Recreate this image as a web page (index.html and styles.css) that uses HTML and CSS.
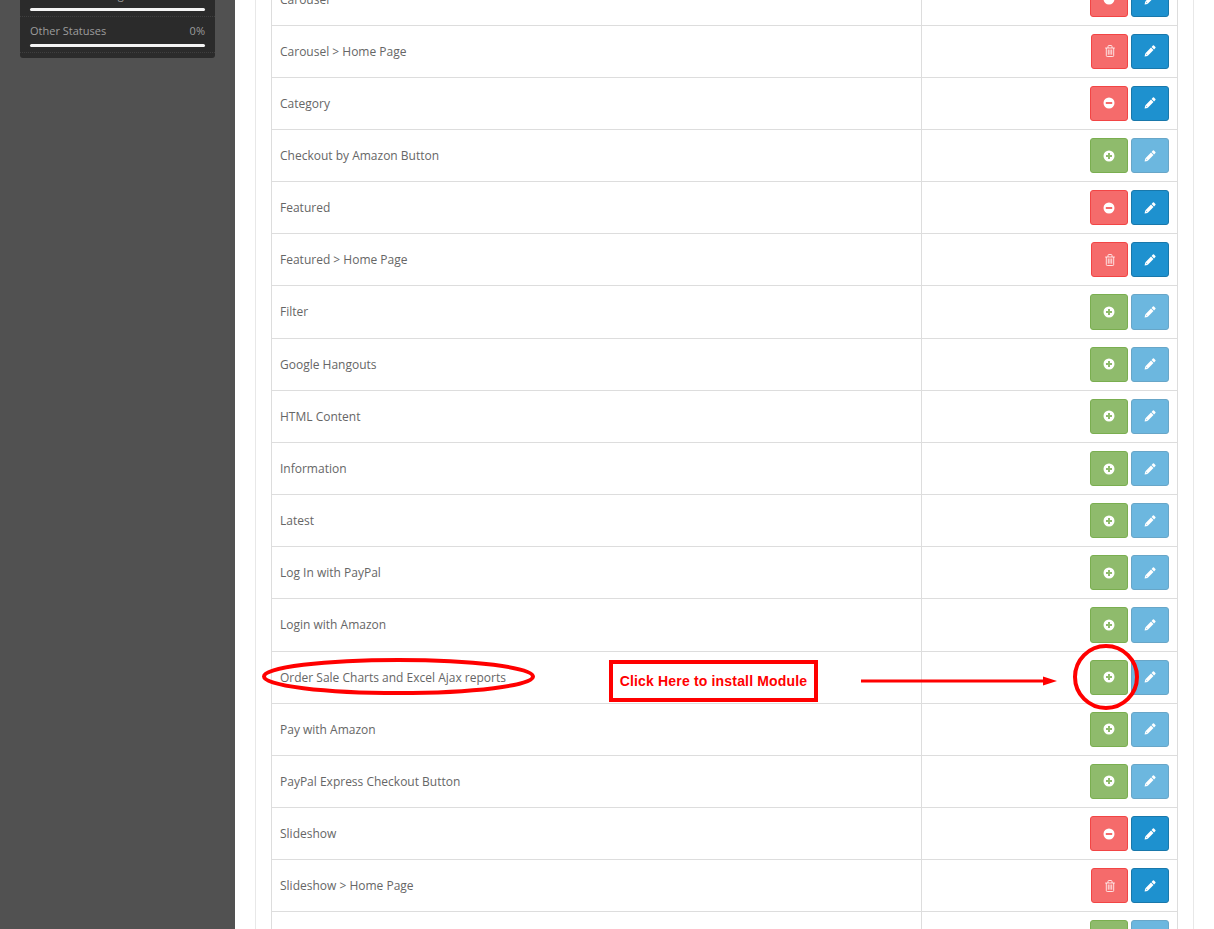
FILE: index.html
```html
<!DOCTYPE html>
<html lang="en">
<head>
  <meta charset="UTF-8">
  <title>Modules</title>
  <link rel="stylesheet" href="styles.css">
</head>
<body>
  <svg class="icon-defs" width="0" height="0">
    <defs>
      <symbol id="i-plus" viewBox="0 0 12 12"><path fill-rule="evenodd" d="M6 .5a5.500 5.500 0 1 0 0 11 5.500 5.500 0 0 0 0-11zM5 3h2v2h2v2H7v2H5V7H3V5h2z"/></symbol>
      <symbol id="i-minus" viewBox="0 0 12 12"><path fill-rule="evenodd" d="M6 .5a5.500 5.500 0 1 0 0 11 5.500 5.500 0 0 0 0-11zM2.800 5h6.400v2H2.800z"/></symbol>
      <symbol id="i-pencil" viewBox="0 0 12 12"><path d="M8.900.6a.8.8 0 0 1 1.100 0l1.400 1.400a.8.8 0 0 1 0 1.100L10.100 4.400 7.600 1.900zM7 2.500 9.500 5l-5.900 5.900-3 .6.600-3zM1.700 8.900l1.400 1.400.5-.1-1.800-1.800z" fill-rule="evenodd"/></symbol>
      <symbol id="i-trash" viewBox="0 0 12 12"><path fill="none" stroke="currentColor" stroke-width=".8" d="M1.200 3h9.600M2.300 3v7.600a.9.900 0 0 0 .9.900h5.600a.9.900 0 0 0 .9-.9V3M4 3V1.400a.9.900 0 0 1 .9-.9h2.200a.9.900 0 0 1 .9.900V3M4.300 4.500v5.200M6 4.500v5.200M7.700 4.500v5.200"/></symbol>
    </defs>
  </svg>

  <div class="layout">
    <aside class="sidebar">
      <div class="stats">
        <div class="stat">
          <div class="stat-label"><span>Orders Processing</span><span>0%</span></div>
          <div class="stat-bar"></div>
        </div>
        <div class="stat">
          <div class="stat-label"><span>Other Statuses</span><span>0%</span></div>
          <div class="stat-bar"></div>
        </div>
      </div>
    </aside>

    <main class="content">
      <div class="panel">
        <table class="module-table">
          <tbody>
            <tr><td>Carousel</td><td><div class="actions"><a class="btn btn-danger"><svg class="ico"><use href="#i-minus"/></svg></a><a class="btn btn-primary"><svg class="ico"><use href="#i-pencil"/></svg></a></div></td></tr>
            <tr><td>Carousel &gt; Home Page</td><td><div class="actions"><a class="btn btn-danger btn-narrow"><svg class="ico"><use href="#i-trash"/></svg></a><a class="btn btn-primary"><svg class="ico"><use href="#i-pencil"/></svg></a></div></td></tr>
            <tr><td>Category</td><td><div class="actions"><a class="btn btn-danger"><svg class="ico"><use href="#i-minus"/></svg></a><a class="btn btn-primary"><svg class="ico"><use href="#i-pencil"/></svg></a></div></td></tr>
            <tr><td>Checkout by Amazon Button</td><td><div class="actions"><a class="btn btn-success"><svg class="ico"><use href="#i-plus"/></svg></a><a class="btn btn-primary disabled"><svg class="ico"><use href="#i-pencil"/></svg></a></div></td></tr>
            <tr><td>Featured</td><td><div class="actions"><a class="btn btn-danger"><svg class="ico"><use href="#i-minus"/></svg></a><a class="btn btn-primary"><svg class="ico"><use href="#i-pencil"/></svg></a></div></td></tr>
            <tr><td>Featured &gt; Home Page</td><td><div class="actions"><a class="btn btn-danger btn-narrow"><svg class="ico"><use href="#i-trash"/></svg></a><a class="btn btn-primary"><svg class="ico"><use href="#i-pencil"/></svg></a></div></td></tr>
            <tr><td>Filter</td><td><div class="actions"><a class="btn btn-success"><svg class="ico"><use href="#i-plus"/></svg></a><a class="btn btn-primary disabled"><svg class="ico"><use href="#i-pencil"/></svg></a></div></td></tr>
            <tr><td>Google Hangouts</td><td><div class="actions"><a class="btn btn-success"><svg class="ico"><use href="#i-plus"/></svg></a><a class="btn btn-primary disabled"><svg class="ico"><use href="#i-pencil"/></svg></a></div></td></tr>
            <tr><td>HTML Content</td><td><div class="actions"><a class="btn btn-success"><svg class="ico"><use href="#i-plus"/></svg></a><a class="btn btn-primary disabled"><svg class="ico"><use href="#i-pencil"/></svg></a></div></td></tr>
            <tr><td>Information</td><td><div class="actions"><a class="btn btn-success"><svg class="ico"><use href="#i-plus"/></svg></a><a class="btn btn-primary disabled"><svg class="ico"><use href="#i-pencil"/></svg></a></div></td></tr>
            <tr><td>Latest</td><td><div class="actions"><a class="btn btn-success"><svg class="ico"><use href="#i-plus"/></svg></a><a class="btn btn-primary disabled"><svg class="ico"><use href="#i-pencil"/></svg></a></div></td></tr>
            <tr><td>Log In with PayPal</td><td><div class="actions"><a class="btn btn-success"><svg class="ico"><use href="#i-plus"/></svg></a><a class="btn btn-primary disabled"><svg class="ico"><use href="#i-pencil"/></svg></a></div></td></tr>
            <tr><td>Login with Amazon</td><td><div class="actions"><a class="btn btn-success"><svg class="ico"><use href="#i-plus"/></svg></a><a class="btn btn-primary disabled"><svg class="ico"><use href="#i-pencil"/></svg></a></div></td></tr>
            <tr><td>Order Sale Charts and Excel Ajax reports</td><td><div class="actions"><a class="btn btn-success"><svg class="ico"><use href="#i-plus"/></svg></a><a class="btn btn-primary disabled"><svg class="ico"><use href="#i-pencil"/></svg></a></div></td></tr>
            <tr><td>Pay with Amazon</td><td><div class="actions"><a class="btn btn-success"><svg class="ico"><use href="#i-plus"/></svg></a><a class="btn btn-primary disabled"><svg class="ico"><use href="#i-pencil"/></svg></a></div></td></tr>
            <tr><td>PayPal Express Checkout Button</td><td><div class="actions"><a class="btn btn-success"><svg class="ico"><use href="#i-plus"/></svg></a><a class="btn btn-primary disabled"><svg class="ico"><use href="#i-pencil"/></svg></a></div></td></tr>
            <tr><td>Slideshow</td><td><div class="actions"><a class="btn btn-danger"><svg class="ico"><use href="#i-minus"/></svg></a><a class="btn btn-primary"><svg class="ico"><use href="#i-pencil"/></svg></a></div></td></tr>
            <tr><td>Slideshow &gt; Home Page</td><td><div class="actions"><a class="btn btn-danger btn-narrow"><svg class="ico"><use href="#i-trash"/></svg></a><a class="btn btn-primary"><svg class="ico"><use href="#i-pencil"/></svg></a></div></td></tr>
            <tr><td></td><td><div class="actions"><a class="btn btn-success"><svg class="ico"><use href="#i-plus"/></svg></a><a class="btn btn-primary disabled"><svg class="ico"><use href="#i-pencil"/></svg></a></div></td></tr>
          </tbody>
        </table>
      </div>
    </main>
  </div>

  <!-- red notes drawn on top of the screenshot -->
  <svg class="notes" width="1214" height="929" viewBox="0 0 1214 929">
    <ellipse cx="398.500" cy="676.500" rx="134.500" ry="16.500" fill="none" stroke="#f00" stroke-width="4"/>
    <circle cx="1106" cy="677" r="31" fill="none" stroke="#f00" stroke-width="4"/>
    <path d="M861 679.500h182v-3l14 4.500-14 4.500v-3H861z" fill="#f00"/>
  </svg>
  <div class="note-label">Click Here to install Module</div>
</body>
</html>
```

FILE: styles.css
```css
html, body {
  margin: 0;
  padding: 0;
  height: 100%;
  overflow: hidden;
}

body {
  font-family: "Open Sans", sans-serif;
  font-size: 12px;
  line-height: 1.42857;
  color: #666;
  background-color: #fff;
}

.icon-defs {
  position: absolute;
}

.layout {
  display: flex;
  height: 929px;
}

.sidebar {
  flex: 0 0 235px;
  background-color: #515151;
  padding-left: 20px;
  box-sizing: border-box;
}

.stats {
  width: 195px;
  height: 58px;
  box-sizing: border-box;
  padding-bottom: 5px;
  background-color: #2b2b2b;
  border-radius: 0 0 3px 3px;
  overflow: hidden;
  display: flex;
  flex-direction: column;
  justify-content: flex-end;
}

.stat {
  flex: none;
  height: 36px;
  box-sizing: border-box;
  padding: 6px 10px 0;
  border-bottom: 1px dotted #3f3f3f;
}

.stat-label {
  display: flex;
  justify-content: space-between;
  font-size: 11px;
  line-height: 16px;
  color: #9d9d9d;
}

.stat-bar {
  height: 3px;
  margin-top: 5px;
  background-color: #f5f5f5;
  border-radius: 2px;
}

.content {
  flex: 1;
  min-width: 0;
  padding: 0 20px;
}

.panel {
  height: 100%;
  box-sizing: border-box;
  border: 1px solid #e8e8e8;
  border-width: 0 1px;
  padding: 0 15px;
  overflow: hidden;
}

.module-table {
  width: 907px;
  margin-top: -27.470px;
  border-collapse: collapse;
  table-layout: fixed;
}

.module-table td {
  border: 1px solid #ddd;
  padding: 8px;
  vertical-align: middle;
}

.module-table td:first-child {
  width: 633px;
}

.actions {
  display: flex;
  justify-content: flex-end;
  gap: 3px;
}

.btn {
  display: flex;
  align-items: center;
  justify-content: center;
  box-sizing: border-box;
  width: 38px;
  height: 35.167px;
  border: 1px solid transparent;
  border-radius: 3px;
  color: #fff;
}

.btn-narrow {
  width: 37px;
}

.btn-danger {
  background-color: #f56b6b;
  border-color: #f24545;
}

.btn-primary {
  background-color: #1e91cf;
  border-color: #1978ab;
}

.btn-success {
  background-color: #8fbb6c;
  border-color: #7aae50;
}

.btn.disabled {
  opacity: 0.65;
}

.ico {
  width: 12px;
  height: 12px;
  fill: currentColor;
}

.notes {
  position: absolute;
  top: 0;
  left: 0;
  pointer-events: none;
}

.note-label {
  position: absolute;
  left: 609px;
  top: 660px;
  width: 209px;
  height: 42px;
  box-sizing: border-box;
  border: 4px solid #f00;
  background-color: #fff;
  color: #f00;
  font-family: "Liberation Sans", Arial, sans-serif;
  font-size: 14px;
  font-weight: bold;
  letter-spacing: 0.170px;
  line-height: 35px;
  text-align: center;
  white-space: nowrap;
}
```
